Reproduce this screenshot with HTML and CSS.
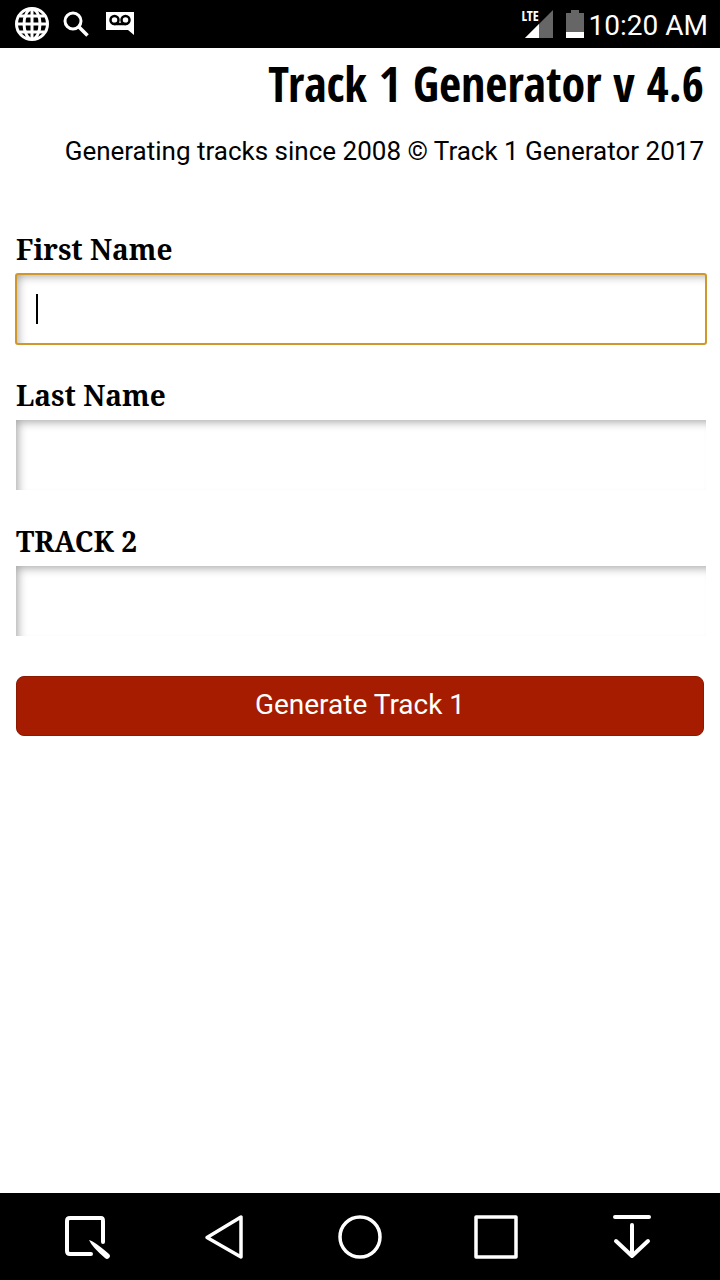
FILE: index.html
```html
<!DOCTYPE html>
<html lang="en">
  <head>
    <meta charset="UTF-8" />
    <meta name="viewport" content="width=device-width, initial-scale=1.0" />
    <title>Track 1 Generator</title>
    <link rel="stylesheet" href="styles.css">
  </head>
  <body>
    <div class="status-bar">
      <div class="status-left">
        <svg width="34" height="34" viewBox="0 0 34 34" fill="none" stroke="#fff" stroke-width="3">
          <circle cx="17" cy="17" r="15.500" />
          <ellipse cx="17" cy="17" rx="8" ry="15" />
          <path d="M17 2v30M2 17h30M5 9h24M5 25h24" />
        </svg>
        <svg width="29" height="26" viewBox="0 0 29 26" fill="none" stroke="#fff">
          <circle cx="10" cy="10" r="8" stroke-width="3" />
          <path d="M16 16l8.500 8.500" stroke-width="3.500" />
        </svg>
        <svg width="28" height="26" viewBox="0 0 28 26">
          <path fill="#fff" d="M0 1h28v23l-6-5H0z" />
          <g fill="none" stroke="#000" stroke-width="2.500">
            <circle cx="8.500" cy="9" r="4" />
            <circle cx="19.500" cy="9" r="4" />
            <path d="M8 13h12" />
          </g>
        </svg>
      </div>
      <div class="status-right">
        <span class="signal">
          <span class="network">LTE</span>
          <svg width="28" height="28" viewBox="0 0 28 28">
            <path fill="#666" d="M28 0v28H0z" />
            <path fill="#fff" d="M14 14v14H0z" />
          </svg>
        </span>
        <svg width="18" height="28" viewBox="0 0 18 28">
          <path fill="#666" d="M5 0h8v3h5v25H0V3h5z" />
          <path fill="#fff" d="M0 22h18v6H0z" />
        </svg>
        <span class="clock">10:20 AM</span>
      </div>
    </div>

    <main>
      <header>
        <h1>Track 1 Generator v 4.6</h1>
        <p>Generating tracks since 2008 © Track 1 Generator 2017</p>
      </header>

      <form id="trackForm">
        <div class="field active">
          <label for="firstName">First Name</label>
          <div class="input-wrap">
            <input type="text" id="firstName" name="firstName" />
            <span class="caret"></span>
          </div>
        </div>
        <div class="field">
          <label for="lastName">Last Name</label>
          <div class="input-wrap">
            <input type="text" id="lastName" name="lastName" />
          </div>
        </div>
        <div class="field">
          <label for="track2">TRACK 2</label>
          <div class="input-wrap">
            <input type="text" id="track2" name="track2" />
          </div>
        </div>
        <button type="button" class="generate">Generate Track 1</button>
      </form>
    </main>

    <nav class="nav-bar">
      <button type="button" aria-label="Capture">
        <svg width="48" height="48" viewBox="0 0 48 48" fill="none" stroke="#fff" stroke-width="4" stroke-linecap="round" stroke-linejoin="round">
          <path d="M27 41H6q-3 0-3-3V8q0-3 3-3h31q2 0 2 3v21" />
          <path fill="#fff" stroke="none" d="M25 27q5 1 20 14a2.700 2.700 0 0 1-4 4Q28 34 25 27z" />
        </svg>
      </button>
      <button type="button" aria-label="Back">
        <svg width="48" height="48" viewBox="0 0 48 48" fill="none" stroke="#fff" stroke-width="3.500" stroke-linejoin="round">
          <path d="M41 4v40L7 24.500z" />
        </svg>
      </button>
      <button type="button" aria-label="Home">
        <svg width="48" height="48" viewBox="0 0 48 48" fill="none" stroke="#fff" stroke-width="3.500">
          <circle cx="24" cy="24" r="20" />
        </svg>
      </button>
      <button type="button" aria-label="Recent apps">
        <svg width="48" height="48" viewBox="0 0 48 48" fill="none" stroke="#fff" stroke-width="3.500" stroke-linejoin="round">
          <path d="M4 4h40v40H4z" />
        </svg>
      </button>
      <button type="button" aria-label="Notifications">
        <svg width="48" height="48" viewBox="0 0 48 48" fill="none" stroke="#fff" stroke-width="4" stroke-linecap="round" stroke-linejoin="round">
          <path d="M7 4h34M24 12v31M8 28l16 15 16-15" />
        </svg>
      </button>
    </nav>
  </body>
</html>
```
FILE: styles.css
```css
* {
  box-sizing: border-box;
}

body {
  display: flex;
  flex-direction: column;
  min-height: 100vh;
  margin: 0;
  background-color: #fff;
  color: #000;
  font-family: Roboto, sans-serif;
}

svg {
  display: block;
}

.status-bar {
  display: flex;
  align-items: center;
  justify-content: space-between;
  height: 48px;
  padding: 0 12px 0 15px;
  background-color: #000;
  color: #fff;
}

.status-left {
  display: flex;
  align-items: center;
  gap: 14px;
}

.status-right {
  display: flex;
  align-items: center;
  gap: 13px;
}

.signal {
  position: relative;
}

/* sits over the corner of the signal triangle */
.network {
  position: absolute;
  top: 0;
  left: -3px;
  font-family: "Open Sans Condensed", "Open Sans", sans-serif;
  font-size: 14px;
  font-weight: bold;
  line-height: 12px;
}

.clock {
  margin-left: -8px;
  padding-top: 4px;
  font-size: 28px;
  line-height: 44px;
}

main {
  flex: 1;
  padding: 0 16px;
}

header {
  text-align: right;
}

h1 {
  margin: 0;
  font-family: "Open Sans Condensed", "Noto Sans Condensed", "Open Sans", sans-serif;
  font-size: 48px;
  font-weight: bold;
  line-height: 72px;
}

header p {
  margin: 11px 0 58px;
  font-size: 26px;
  line-height: 40px;
}

.field {
  margin-bottom: 31px;
}

label {
  display: block;
  padding-bottom: 5px;
  font-family: "Noto Serif", "DejaVu Serif Condensed", "DejaVu Serif", serif;
  font-size: 28px;
  font-weight: bold;
  line-height: 40px;
}

.input-wrap {
  position: relative;
  margin-right: -2px;
}

input {
  display: block;
  width: 100%;
  height: 70px;
  padding: 20px;
  border: none;
  background-color: #fff;
  box-shadow: inset 5px 5px 10px -3px rgba(0, 0, 0, 0.35);
  font-family: Roboto, sans-serif;
  font-size: 26px;
}

.active input {
  outline: 2px solid #d0982a;
  outline-offset: -1px;
  border-radius: 2px;
}

.caret {
  position: absolute;
  top: 20px;
  left: 20px;
  width: 2px;
  height: 30px;
  background-color: #000;
}

.generate {
  display: block;
  width: 100%;
  height: 60px;
  margin-top: 40px;
  padding: 0 0 4px;
  border: 1px solid #8c1a00;
  border-radius: 8px;
  background-color: #a61c00;
  color: #fff;
  font-family: Roboto, sans-serif;
  font-size: 28px;
  cursor: pointer;
}

.nav-bar {
  display: flex;
  height: 87px;
  padding: 0 20px;
  background-color: #000;
}

.nav-bar button {
  display: flex;
  flex: 1;
  align-items: center;
  justify-content: center;
  padding: 0;
  border: none;
  background: none;
  cursor: pointer;
}
```
